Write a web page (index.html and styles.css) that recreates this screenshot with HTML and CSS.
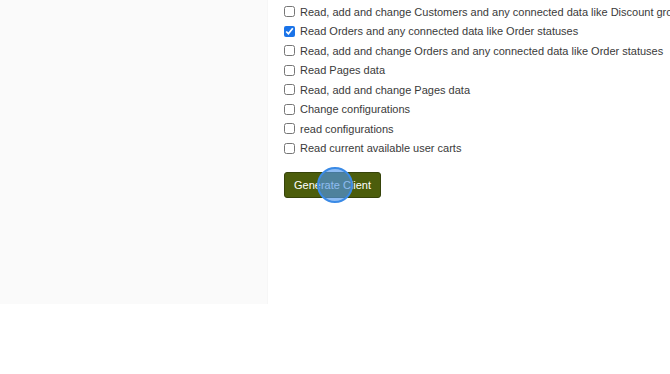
FILE: index.html
```html
<!DOCTYPE html>
<html lang="en">
<head>
    <meta charset="UTF-8">
    <meta name="viewport" content="width=device-width, initial-scale=1.0">
    <title>Generate Client</title>
    <link rel="stylesheet" href="styles.css">
</head>
<body>

    <div class="layout">
        <aside class="sidebar"></aside>

        <main class="content">
            <ul class="scopes">
                <li><label><input type="checkbox"> Read, add and change Customers and any connected data like Discount groups</label></li>
                <li><label><input type="checkbox" checked> Read Orders and any connected data like Order statuses</label></li>
                <li><label><input type="checkbox"> Read, add and change Orders and any connected data like Order statuses</label></li>
                <li><label><input type="checkbox"> Read Pages data</label></li>
                <li><label><input type="checkbox"> Read, add and change Pages data</label></li>
                <li><label><input type="checkbox"> Change configurations</label></li>
                <li><label><input type="checkbox"> read configurations</label></li>
                <li><label><input type="checkbox"> Read current available user carts</label></li>
            </ul>

            <div class="actions">
                <button class="generate-button">Generate Client</button>
                <span class="click-marker"></span>
            </div>
        </main>
    </div>

</body>
</html>
```

FILE: styles.css
```css
body {
    font-family: "Liberation Sans", Arial, sans-serif;
    margin: 0;
    padding: 0;
    background: #fff;
    color: #3a3a3a;
    overflow: hidden;
}

.layout {
    display: flex;
    height: 374px;
}

.sidebar {
    width: 267px;
    height: 304px;
    background: #fafafa;
    border-right: 1px solid #f6f6f6;
    flex-shrink: 0;
}

.content {
    padding: 2px 0 0 16px;
    min-width: 0;
    overflow: hidden;
    white-space: nowrap;
}

.scopes {
    list-style: none;
    margin: 0;
    padding: 0;
}

.scopes li {
    height: 19.5px;
    display: flex;
    align-items: center;
}

.scopes label {
    display: flex;
    align-items: center;
    font-size: 11px;
}

.scopes input {
    width: 11px;
    height: 11px;
    margin: 0 5px 0 0;
    accent-color: #1a73e8;
}

.actions {
    position: relative;
    margin-top: 14px;
}

.generate-button {
    background: #4c5d0c;
    color: #fff;
    border: 1px solid #36430a;
    border-radius: 3px;
    padding: 0 9px;
    width: 97px;
    height: 26px;
    font-family: inherit;
    font-size: 11px;
    cursor: pointer;
}

.click-marker {
    position: absolute;
    left: 33px;
    top: -5px;
    width: 36px;
    height: 36px;
    border-radius: 50%;
    background: rgba(80, 150, 235, 0.65);
    border: 2px solid #3a8ae6;
    box-sizing: border-box;
}
```
